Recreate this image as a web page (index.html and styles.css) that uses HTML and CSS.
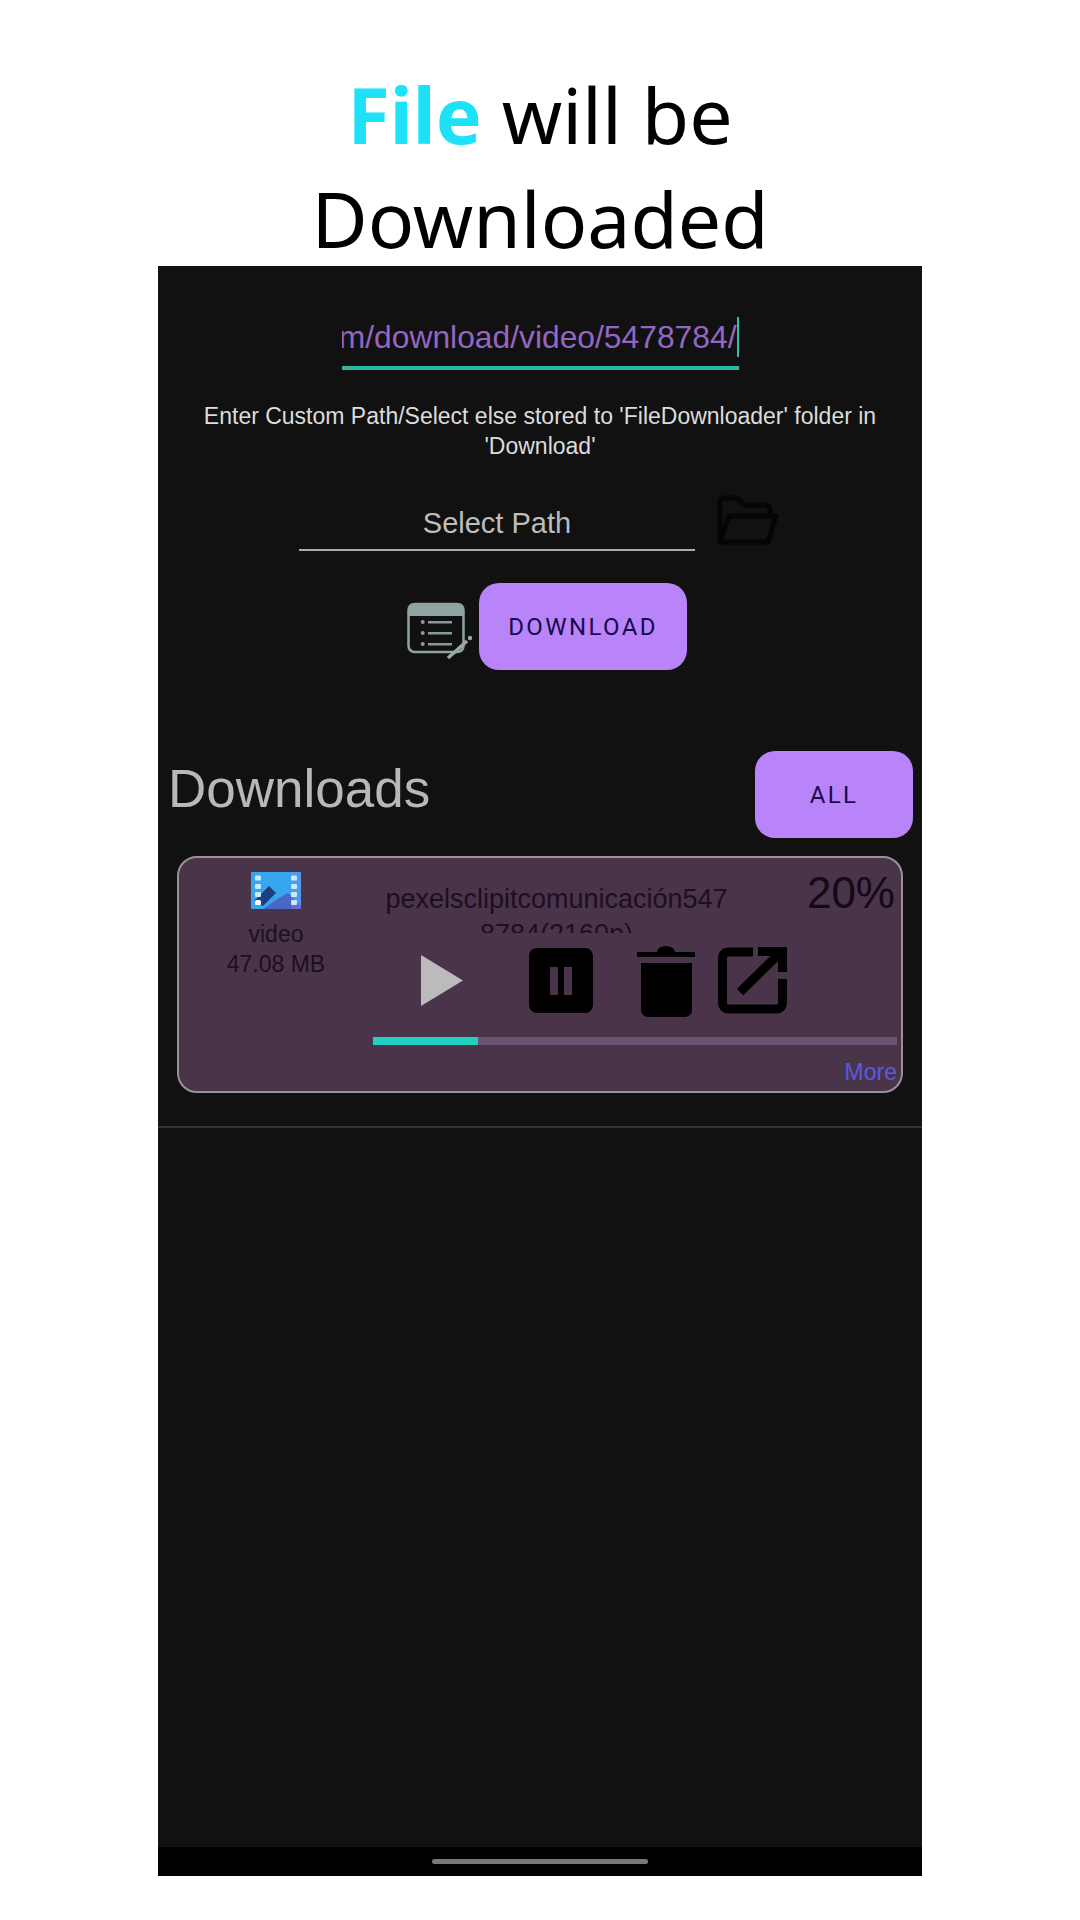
FILE: index.html
```html
<!DOCTYPE html>
<html lang="en">
<head>
<meta charset="utf-8">
<title>File will be Downloaded</title>
<link rel="stylesheet" href="styles.css">
</head>
<body>
<h1 class="title"><strong class="accent">File</strong> will be<br>Downloaded</h1>
<main class="phone">
  <div class="screen">
    <div class="url"><span class="url-text">https://www.pexels.com/download/video/5478784/</span><i class="caret"></i></div>
    <p class="hint">Enter Custom Path/Select else stored to 'FileDownloader' folder in 'Download'</p>
    <div class="path-row">
      <div class="path">Select Path</div>
      <svg class="folder" viewBox="0 0 62 52" fill="none" stroke="#050505" stroke-width="5" stroke-linejoin="round"><path d="M3 47V7a4 4 0 0 1 4-4h13l7 7h22a4 4 0 0 1 4 4v8"/><path d="M3 47l9-26h47l-8 26z"/></svg>
    </div>
    <div class="dl-row">
      <svg class="notes" viewBox="0 0 66 58"><path d="M1 8a6 6 0 0 1 6-6h44a6 6 0 0 1 6 6v6H1z" fill="#8fa3a3"/><rect x="1.500" y="2" width="55" height="48" rx="6" fill="none" stroke="#8fa3a3" stroke-width="2.500"/><g fill="#8a9a9a"><circle cx="15.700" cy="20" r="2"/><circle cx="15.700" cy="31" r="2"/><circle cx="15.700" cy="42" r="2"/><rect x="21" y="19" width="24" height="2.500"/><rect x="21" y="30" width="24" height="2.500"/><rect x="21" y="41" width="24" height="2.500"/></g><path d="M41 56L60 39" fill="none" stroke="#9aa8a8" stroke-width="3.500"/><circle cx="63" cy="36" r="2.200" fill="#9aa8a8"/></svg>
      <button class="btn btn-dl">DOWNLOAD</button>
    </div>
    <div class="head-row">
      <h2 class="downloads">Downloads</h2>
      <button class="btn btn-all">ALL</button>
    </div>
    <article class="card">
      <div class="meta">
        <svg class="film" viewBox="0 0 50 37"><rect width="50" height="37" rx="1" fill="#37a6ee"/><path d="M12 37l16-11 9-5 13 13v3z" fill="#4a66c8"/><path d="M18 14l7 7-13 13-9-5z" fill="#1c3f80"/><path d="M40 0h10v37H40z" fill="#8a7fe0" opacity=".35"/><g fill="#c8eaff"><rect x="4" y="3.500" width="6" height="5" rx="1"/><rect x="4" y="12" width="6" height="5" rx="1"/><rect x="4" y="20" width="6" height="5" rx="1"/><rect x="40" y="3.500" width="6" height="5" rx="1"/><rect x="40" y="12" width="6" height="5" rx="1"/><rect x="40" y="20" width="6" height="5" rx="1"/><rect x="40" y="28" width="6" height="5" rx="1"/></g><rect x="4" y="28" width="6" height="5" rx="1.500" fill="#fff"/></svg>
        <div class="meta-text">video<br>47.08 MB</div>
      </div>
      <div class="body">
        <div class="top">
          <div class="name">pexelsclipitcomunicación547<br>8784(2160p)</div>
          <div class="pct">20%</div>
        </div>
        <div class="actions">
          <svg class="ic-play" viewBox="0 0 42 51"><path d="M0 0l42 25.500L0 51z" fill="#bdbabd"/></svg>
          <div class="ic-pause"><i></i><i></i></div>
          <svg class="ic-trash" viewBox="0 0 58 72"><path d="M0 7h20a9 6 0 0 1 18 0h20v5H0z" fill="#000"/><path d="M4 18h51v47a7 7 0 0 1-7 7H11a7 7 0 0 1-7-7z" fill="#000"/></svg>
          <svg class="ic-open" viewBox="0 0 69 67" fill="none" stroke="#000" stroke-width="9"><path d="M35 5H10a5.500 5.500 0 0 0-5.500 5.500v46A5.500 5.500 0 0 0 10 62h49a5.500 5.500 0 0 0 5.500-5.500V32"/><path d="M22 45L62 6"/><path d="M40 4.500h24.500V25"/></svg>
        </div>
        <div class="track"><div class="fill" style="width:20%"></div></div>
        <div class="more">More</div>
      </div>
    </article>
    <hr class="rule">
  </div>
  <div class="nav"><span class="pill"></span></div>
</main>
</body>
</html>
```
FILE: styles.css
```css
* { box-sizing: border-box; }
html, body { margin: 0; padding: 0; background: #fff; }
body { width: 1080px; height: 1920px; overflow: hidden; }

.title {
  height: 266px;
  margin: 0;
  padding-top: 63px;
  font: 400 77px/104px "Noto Sans", sans-serif;
  color: #000;
  text-align: center;
}
.accent { font-weight: 700; color: #1ce1f7; }

.phone {
  width: 764px;
  height: 1610px;
  margin: 0 auto;
  background: #111;
  display: flex;
  flex-direction: column;
  font-family: "Liberation Sans", sans-serif;
}
.screen { flex: 1; display: flex; flex-direction: column; min-height: 0; }

.url {
  width: 397px;
  height: 54px;
  margin: 50px auto 0;
  padding-bottom: 8px;
  display: flex;
  justify-content: flex-end;
  align-items: center;
  overflow: hidden;
  border-bottom: 4px solid #2fb8a6;
  white-space: nowrap;
  flex-shrink: 0;
}
.url-text { font-size: 31.800px; color: #9466c4; flex-shrink: 0; }
.caret { width: 2px; height: 40px; margin-left: 0; background: #2fc0b0; flex-shrink: 0; }

.hint {
  margin: 31px 0 0;
  padding: 0 38px;
  font-size: 23px;
  line-height: 30px;
  color: #dcdcdc;
  text-align: center;
}

.path-row { display: flex; align-items: flex-end; margin: 34px 0 0 141px; }
.path {
  width: 396px;
  height: 51px;
  border-bottom: 2px solid #aaa;
  font-size: 29px;
  line-height: 46px;
  color: #bdbdbd;
  text-align: center;
}
.folder { width: 62px; height: 52px; margin: 0 0 4px 22px; flex-shrink: 0; }

.dl-row { display: flex; align-items: center; margin: 32px 0 0 249px; }
.notes { width: 66px; height: 58px; margin: 9px 6px 0 0; }
.btn {
  border: 0;
  border-radius: 20px;
  background: #b983fa;
  color: #180a4a;
  font: 400 24px "Roboto", sans-serif;
  letter-spacing: 2.400px;
  padding: 0;
}
.btn-dl { width: 208px; height: 87px; }

.head-row { display: flex; justify-content: space-between; align-items: center; margin-top: 81px; padding: 0 9px 0 10px; }
.downloads { margin: 0 0 12px; font-size: 53px; font-weight: 400; color: #b8b8b8; }
.btn-all { width: 158px; height: 87px; }

.card {
  display: flex;
  width: 726px;
  height: 237px;
  margin: 18px 0 0 19px;
  border: 2px solid #9a9298;
  border-radius: 20px;
  background: #4a344a;
  flex-shrink: 0;
}
.meta { width: 194px; padding-top: 14px; display: flex; flex-direction: column; align-items: center; flex-shrink: 0; }
.film { width: 50px; height: 37px; }
.meta-text { margin-top: 10px; font-size: 23px; line-height: 30px; color: #1c0f20; text-align: center; }

.body { flex: 1; display: flex; flex-direction: column; padding-right: 4px; min-width: 0; }
.top { display: flex; height: 75px; flex-shrink: 0; }
.name {
  width: 367px;
  height: 75px;
  padding-top: 24px;
  overflow: hidden;
  font-size: 27px;
  line-height: 35px;
  color: #1c0f20;
  text-align: center;
  white-space: nowrap;
  flex-shrink: 0;
}
.pct { flex: 1; padding: 10px 2px 0 0; font-size: 44px; line-height: 50px; color: #120a14; text-align: right; }
.actions { display: flex; align-items: center; height: 73px; margin-top: 11px; flex-shrink: 0; }
.ic-play { width: 42px; height: 51px; margin-left: 48px; }
.ic-pause { width: 64px; height: 65px; margin-left: 66px; display: flex; justify-content: center; gap: 6px; align-items: center; background: #000; border-radius: 8px; }
.ic-pause i { width: 8px; height: 28px; background: #4a344a; }
.ic-trash { width: 58px; height: 72px; margin-left: 44px; }
.ic-open { width: 69px; height: 67px; margin-left: 23px; }
.track { height: 8px; margin-top: 20px; background: #6a5670; flex-shrink: 0; }
.fill { height: 100%; background: #20d0c0; }
.more { margin-top: 14px; font-size: 23px; line-height: 26px; color: #5a5ae0; text-align: right; }

.rule { width: 100%; height: 2px; margin: 33px 0 0; border: 0; background: #333; flex-shrink: 0; }

.nav { height: 29px; background: #000; display: flex; justify-content: center; align-items: center; flex-shrink: 0; }
.pill { width: 216px; height: 5px; border-radius: 3px; background: #777; }
```
